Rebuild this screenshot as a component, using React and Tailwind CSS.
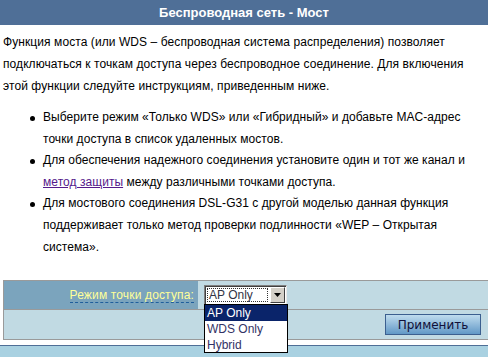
import React from 'react';

const items = [
  ['Выберите режим «Только WDS» или «Гибридный» и добавьте MAC-адрес', 'точки доступа в список удаленных мостов.'],
  null,
  ['Для мостового соединения DSL-G31 с другой моделью данная функция', 'поддерживает только метод проверки подлинности «WEP – Открытая', 'система».'],
];

const Bullet = ({ children }) => (
  <li className="flex">
    <span className="w-[13px] shrink-0 flex pt-[9px]">
      <span className="w-[5px] h-[5px] rounded-full bg-black"></span>
    </span>
    <div className="whitespace-nowrap">{children}</div>
  </li>
);

const App = () => {
  return (
    <div className="w-[488px] h-[357px] overflow-hidden bg-white text-[12px] text-black font-['Liberation_Sans',Arial,sans-serif]">
      <div className="h-[25px] bg-[#4f6f97] flex items-center justify-center text-white font-bold text-[13px]">
        Беспроводная сеть - Мост
      </div>

      <p className="mt-[6px] px-[3px] leading-[22px] whitespace-nowrap tracking-[0.08px]">
        Функция моста (или WDS – беспроводная система распределения) позволяет<br />
        подключаться к точкам доступа через беспроводное соединение. Для включения<br />
        этой функции следуйте инструкциям, приведенным ниже.
      </p>

      <ul className="mt-[10px] pl-[30px] leading-[21.6px] tracking-[0.05px]">
        <Bullet>
          {items[0][0]}<br />{items[0][1]}
        </Bullet>
        <Bullet>
          Для обеспечения надежного соединения установите один и тот же канал и<br />
          <a href="#" className="text-[#551a8b] underline">метод защиты</a> между различными точками доступа.
        </Bullet>
        <Bullet>
          {items[2][0]}<br />{items[2][1]}<br />{items[2][2]}
        </Bullet>
      </ul>

      <div className="mt-[22px] ml-[3px] border-y border-l border-[#9a9a9a]">
        <div className="flex h-[29px] border-b border-[#9a9a9a]">
          <div className="w-[194px] bg-[#7ba4bd] flex items-center justify-end pr-[4px]">
            <span className="text-[#ffff99] border-b border-dashed border-[#1f5e9c] leading-[14px] tracking-[0.15px]">
              Режим точки доступа:
            </span>
          </div>
          <div className="flex-1 bg-[#c1dae3] flex items-center pl-[6px]">
            <div className="relative">
              <div className="w-[83px] h-[20px] flex bg-white border-t border-l border-[#808080] border-b border-r border-b-[#e8e8e8] border-r-[#e8e8e8] shadow-[inset_1px_1px_0_#404040]">
                <div className="flex-1 m-[2px] border border-dotted border-[#333] flex items-center pl-[1px] text-[12px] text-[#334] leading-none">
                  AP Only
                </div>
                <div className="w-[15px] my-[1px] mr-[1px] bg-[#d4d0c8] border-t border-l border-white border-b border-r border-b-[#404040] border-r-[#404040] flex items-center justify-center">
                  <svg width="7" height="4" viewBox="0 0 7 4"><path d="M0 0h7L3.5 4z" fill="#000" /></svg>
                </div>
              </div>
              <div className="absolute left-0 top-[19px] w-[84px] border border-black bg-white z-10 text-[12px] leading-[16px]">
                <div className="bg-[#0a246a] text-white pl-[2px] h-[16px]">AP Only</div>
                <div className="text-[#333366] pl-[2px] h-[16px]">WDS Only</div>
                <div className="text-[#333366] pl-[2px] h-[15px]">Hybrid</div>
              </div>
            </div>
          </div>
        </div>
        <div className="flex h-[29px] bg-[#c1dae3] items-center justify-end pr-[7px]">
          <button className="w-[96px] h-[21px] border border-[#3b5f8f] bg-gradient-to-b from-[#bfdcee] to-[#6198c6] text-[#10103a] text-[12px] font-['DejaVu_Sans',sans-serif] flex items-center justify-center">
            Применить
          </button>
        </div>
      </div>

      <div className="mt-[5px] h-[1px] bg-[#4f6f97]"></div>
      <div className="h-[20px] bg-[#a9d1e1]"></div>
    </div>
  );
};

export default App;
